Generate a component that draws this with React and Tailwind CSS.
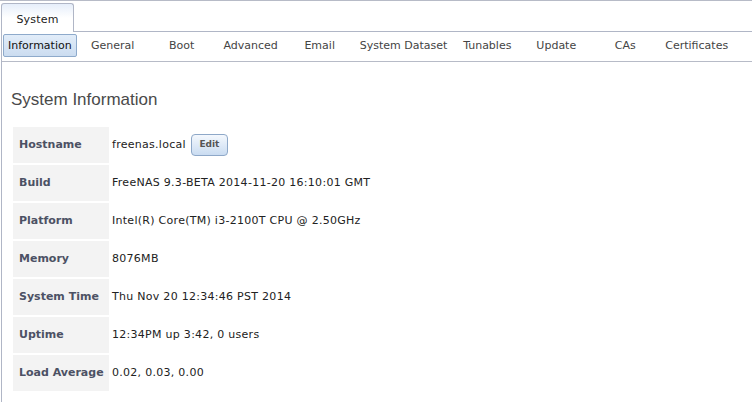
import React from 'react';

const subTabs = [
    'Information',
    'General',
    'Boot',
    'Advanced',
    'Email',
    'System Dataset',
    'Tunables',
    'Update',
    'CAs',
    'Certificates'
];

const rows = [
    { label: 'Hostname', value: 'freenas.local', edit: true },
    { label: 'Build', value: 'FreeNAS 9.3-BETA 2014-11-20 16:10:01 GMT' },
    { label: 'Platform', value: 'Intel(R) Core(TM) i3-2100T CPU @ 2.50GHz' },
    { label: 'Memory', value: '8076MB' },
    { label: 'System Time', value: 'Thu Nov 20 12:34:46 PST 2014' },
    { label: 'Uptime', value: '12:34PM up 3:42, 0 users' },
    { label: 'Load Average', value: '0.02, 0.03, 0.00' }
];

const App = () => {
    return (
        <div className="w-[752px] h-[402px] overflow-hidden bg-white border-t border-[#b7bbc7] font-['DejaVu_Sans',sans-serif] text-[11px] text-[#333]">
            {/* top tab strip */}
            <div className="flex ml-[1px] h-[31px] pt-[2px]">
                <div className="w-[73px] h-[29px] border border-b-0 border-[#b0b6c6] rounded-t-[3px] bg-gradient-to-b from-[#e6eefa] via-white to-white flex items-center justify-center text-[#222] pt-[5px] tracking-[0.2px]">
                    System
                </div>
                <div className="flex-1 border-b border-[#b0b6c6]"></div>
            </div>

            <div className="ml-[1px] border-l border-[#b0b6c6] h-full">
                {/* sub tabs */}
                <div className="flex pl-[1px] pt-[2px] pb-[4px] border-b border-[#b7bbc7]">
                    {subTabs.map((tab, i) => (
                        <div
                            key={tab}
                            className={
                                i === 0
                                    ? 'min-w-[66px] h-[23px] px-[4px] pt-[1px] mr-[3px] flex items-center justify-center border border-[#8eaacb] rounded-[2px] bg-gradient-to-b from-[#e2edf9] to-[#cbdcf0] text-[#111] whitespace-nowrap'
                                    : 'min-w-[66px] h-[23px] px-[3px] pt-[1px] mr-[3px] flex items-center justify-center border border-transparent text-[#444] whitespace-nowrap'
                            }
                        >
                            {tab}
                        </div>
                    ))}
                </div>

                {/* content */}
                <div className="ml-[9px]">
                    <h1 className="mt-[28px] h-[20px] leading-[20px] font-['Liberation_Sans',sans-serif] text-[17px] text-[#4a4a4a]">
                        System Information
                    </h1>
                    <table className="mt-[15px] border-separate border-spacing-[2px]">
                        <tbody>
                            {rows.map((row) => (
                                <tr key={row.label}>
                                    <td className="w-[96px] h-[36px] pl-[6px] bg-[#f3f3f3] font-bold text-[#4c5164] whitespace-nowrap align-middle">
                                        {row.label}
                                    </td>
                                    <td className="h-[36px] pl-[1px] text-[#222] align-middle whitespace-nowrap tracking-[0.28px]">
                                        {row.value}
                                        {row.edit && (
                                            <button className="ml-[5px] w-[37px] h-[22px] align-middle border border-[#8ea8c8] rounded-[4px] bg-gradient-to-b from-[#f4f8fd] to-[#cadcf1] text-[9px] font-bold text-[#555] tracking-normal">
                                                Edit
                                            </button>
                                        )}
                                    </td>
                                </tr>
                            ))}
                        </tbody>
                    </table>
                </div>
            </div>
        </div>
    );
};

export default App;
